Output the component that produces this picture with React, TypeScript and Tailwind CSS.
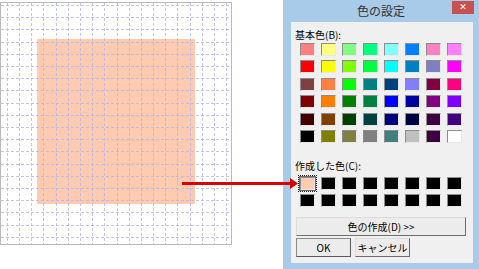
import React from "react";

const basic = [
  ["#FF8080", "#FFFF80", "#80FF80", "#00FF80", "#80FFFF", "#0080FF", "#FF80C0", "#FF80FF"],
  ["#FF0000", "#FFFF00", "#80FF00", "#00FF40", "#00FFFF", "#0080C0", "#8080C0", "#FF00FF"],
  ["#804040", "#FF8040", "#00FF00", "#008080", "#004080", "#8080FF", "#800040", "#FF0080"],
  ["#800000", "#FF8000", "#008000", "#008040", "#0000FF", "#0000A0", "#800080", "#8000FF"],
  ["#400000", "#804000", "#004000", "#004040", "#000080", "#000040", "#400040", "#400080"],
  ["#000000", "#808000", "#808040", "#808080", "#408080", "#C0C0C0", "#400040", "#FFFFFF"],
];

const custom = [
  "#FFCCB0", "#000000", "#000000", "#000000", "#000000", "#000000", "#000000", "#000000",
  "#000000", "#000000", "#000000", "#000000", "#000000", "#000000", "#000000", "#000000",
];

function Swatch({ color, selected }: { color: string; selected?: boolean }) {
  return (
    <div className="relative w-[15px] h-[13px]">
      <div
        className="w-full h-full border border-t-[#8c8c8c] border-l-[#8c8c8c] border-b-[#e8e8e8] border-r-[#e8e8e8]"
        style={{ backgroundColor: color }}
      />
      {selected && (
        <>
          <div className="absolute -inset-[1px] border border-[#6a6a6a]" />
          <div className="absolute -inset-[2px] border border-dotted border-[#222]" />
        </>
      )}
    </div>
  );
}

function Canvas() {
  const vx: number[] = [];
  for (let k = 0; k < 19; k++) vx.push(Math.round(5.7 + 12.2 * k) + 0.5);
  const hy: number[] = [];
  for (let k = 0; k < 20; k++) hy.push(Math.round(2 + 12.2 * k) + 0.5);
  return (
    <div className="mt-[2px] w-[232px] h-[243px] border border-[#b9b9b9] bg-white shrink-0">
      <svg width="230" height="241" className="block">
        <rect x="36" y="36" width="158" height="165" fill="#FFCBB0" />
        {vx.map((x, i) => (
          <line
            key={"v" + i}
            x1={x}
            y1={0}
            x2={x}
            y2={241}
            stroke="#b4b4f0"
            strokeOpacity={0.8}
            strokeWidth={1}
            strokeDasharray="3 2"
          />
        ))}
        {hy.map((y, i) => (
          <line
            key={"h" + i}
            x1={0}
            y1={y}
            x2={230}
            y2={y}
            stroke="#b4b4f0"
            strokeOpacity={0.8}
            strokeWidth={1}
            strokeDasharray="3 2"
          />
        ))}
      </svg>
    </div>
  );
}

export default function App() {
  const font = { fontFamily: '"Noto Sans CJK JP", "Noto Sans", sans-serif' };
  return (
    <div className="relative w-[479px] h-[269px] bg-white flex overflow-hidden" style={font}>
      <Canvas />
      <div className="ml-[51px] w-[196px] h-[269px] bg-[#a9cbea] flex flex-col shrink-0">
        <div className="relative h-[22px] flex items-center justify-center">
          <span className="text-[12px] leading-none text-[#333] mt-[-1px]">色の設定</span>
          <div className="absolute right-[5px] top-[1px] w-[22px] h-[13px] bg-[#c75050] flex items-center justify-center">
            <span className="text-white text-[9px] font-bold leading-none" style={{ fontFamily: '"DejaVu Sans", sans-serif' }}>✕</span>
          </div>
        </div>
        <div className="ml-[8px] w-[182px] h-[241px] bg-[#f0f0f0] flex flex-col pt-[7px] text-black">
          <div className="ml-[4px] h-[12px] text-[10px] leading-[12px]">基本色(B):</div>
          <div className="ml-[9px] mt-[2px] grid grid-cols-[repeat(8,15px)] gap-x-[6px] gap-y-[4.4px]">
            {basic.flat().map((c, i) => (
              <Swatch key={i} color={c} />
            ))}
          </div>
          <div className="ml-[4px] mt-[17px] h-[12px] text-[10px] leading-[12px]">作成した色(C):</div>
          <div className="ml-[9px] mt-[5px] grid grid-cols-[repeat(8,15px)] gap-x-[6px] gap-y-[4.4px]">
            {custom.map((c, i) => (
              <Swatch key={i} color={c} selected={i === 0} />
            ))}
          </div>
          <div className="ml-[5px] mt-[10px] w-[170px] h-[19px] bg-[#ececec] border border-t-[#dcdcdc] border-l-[#dcdcdc] border-b-[#6e6e6e] border-r-[#6e6e6e] flex items-center justify-center text-[10px] leading-none">
            色の作成(D) &gt;&gt;
          </div>
          <div className="ml-[5px] mt-[2px] flex gap-[4px]">
            <div className="w-[55px] h-[19px] bg-[#ececec] border border-t-[#8a8a8a] border-l-[#8a8a8a] border-b-[#5a5a5a] border-r-[#5a5a5a] flex items-center justify-center text-[10px] leading-none">
              OK
            </div>
            <div className="w-[55px] h-[19px] bg-[#ececec] border border-t-[#dcdcdc] border-l-[#dcdcdc] border-b-[#6e6e6e] border-r-[#6e6e6e] flex items-center justify-center text-[10px] leading-none">
              キャンセル
            </div>
          </div>
        </div>
      </div>
      <svg className="absolute left-[180px] top-[176px]" width="120" height="16">
        <line x1="2" y1="7.5" x2="112" y2="7.5" stroke="#d90000" strokeWidth="3" />
        <polygon points="110,2 118,7.5 110,13" fill="#d90000" />
      </svg>
    </div>
  );
}
